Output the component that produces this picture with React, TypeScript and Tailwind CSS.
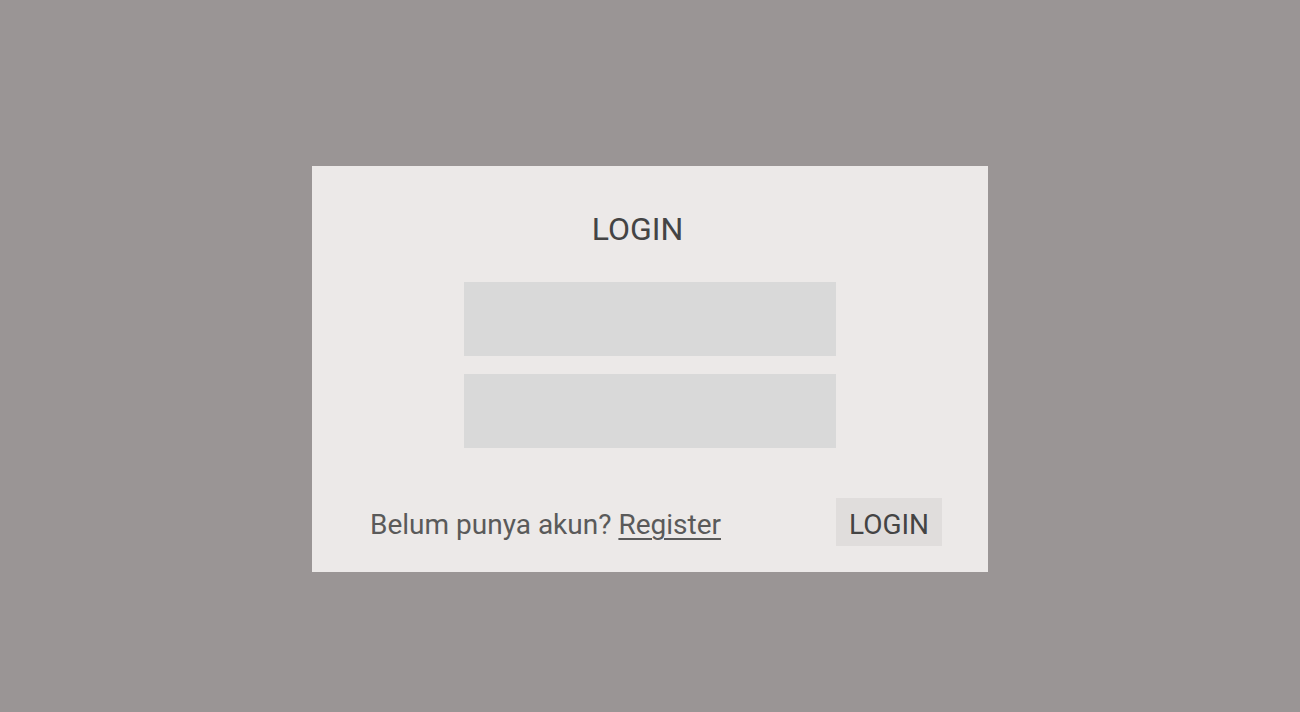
export default function App() {
  return (
    <div className="min-h-[712px] w-full bg-[#9a9595] flex justify-center pt-[166px] font-['Roboto',sans-serif]">
      <div className="w-[676px] h-[406px] bg-[#ece9e8] flex flex-col items-center pt-[45px]">
        <h1 className="text-[32px] leading-[36px] text-[#444444] pr-[25px]">LOGIN</h1>
        <div className="mt-[35px] flex flex-col gap-[18px]">
          <input type="text" className="w-[372px] h-[74px] bg-[#d9d9d9] outline-none border-0" />
          <input type="password" className="w-[372px] h-[74px] bg-[#d9d9d9] outline-none border-0" />
        </div>
        <div className="w-full mt-[50px] flex items-center justify-between pl-[58px] pr-[46px]">
          <p className="mt-[6px] text-[28px] leading-[34px] text-[#5a5a5a]">
            Belum punya akun? <a href="#" className="underline underline-offset-[4px] decoration-[2px]">Register</a>
          </p>
          <button className="h-[48px] w-[106px] pt-[6px] bg-[#e0dddc] text-[28px] leading-[34px] text-[#444444]">LOGIN</button>
        </div>
      </div>
    </div>
  );
}
